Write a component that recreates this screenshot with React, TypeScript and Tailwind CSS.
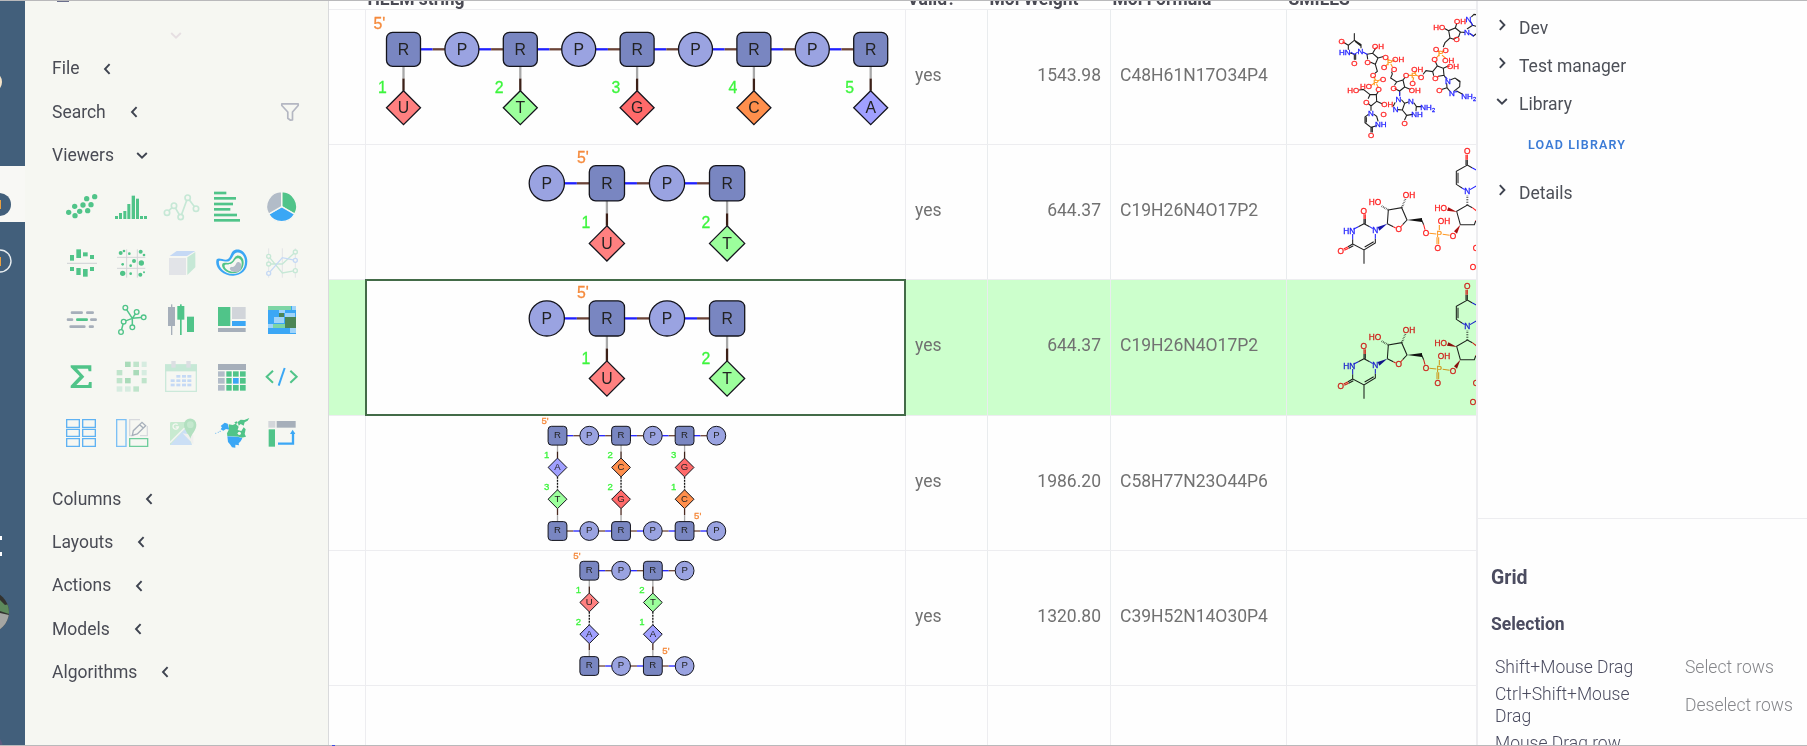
import React from 'react';

const GREEN = '#50c489';
const BLUE = '#3ba7f5';
const SLATE = '#a6afba';
const PALE_GREEN = '#c6e8d6';
const PALE_BLUE = '#c5d9f5';

type Dir = 'left' | 'right' | 'down';

function Chevron({ dir, color = '#3f4450' }: { dir: Dir; color?: string }) {
  const d = dir === 'left' ? 'M9.6 2.2 5 7l4.600 4.800' : dir === 'right' ? 'M4.800 2.200 9.400 7l-4.600 4.800' : 'M2.200 5 7 9.600 11.800 5';
  return (
    <svg width="14" height="14" viewBox="0 0 14 14" className="shrink-0" fill="none" stroke={color} strokeWidth="1.9">
      <path d={d} />
    </svg>
  );
}

function Rects({ list, fill }: { list: number[][]; fill: string }) {
  return (
    <g fill={fill}>
      {list.map(([x, y, w, h], i) => (
        <rect key={i} x={x} y={y} width={w} height={h} />
      ))}
    </g>
  );
}

function Dots({ list, fill = GREEN }: { list: number[][]; fill?: string }) {
  return (
    <g fill={fill}>
      {list.map(([x, y, r], i) => (
        <circle key={i} cx={x} cy={y} r={r} />
      ))}
    </g>
  );
}

function Rings({ list, r, color, width = 4 }: { list: number[][]; r: number; color: string; width?: number }) {
  return (
    <g fill="#f6f7f2" stroke={color} strokeWidth={width}>
      {list.map(([x, y], i) => (
        <circle key={i} cx={x} cy={y} r={r} />
      ))}
    </g>
  );
}

const topIcons: React.ReactNode[] = [
  <Dots key="scatter" list={[[56, 97, 8], [74, 79, 8], [75, 107, 8], [89, 94, 8], [99, 75, 8], [110, 56, 8], [134, 50, 8], [123, 74, 8], [113, 92, 8]]} />,
  <Rects key="hist" fill={GREEN} list={[[195, 108, 9, 9], [207, 99, 9, 18], [220, 93, 9, 24], [232, 72, 9, 45], [245, 47, 10, 70], [258, 56, 9, 61], [270, 108, 9, 9], [282, 108, 9, 9]]} />,
  <g key="line">
    <path d="M351 98 372 77 392 111 413 53 438 86" fill="none" stroke={PALE_GREEN} strokeWidth="5" />
    <Rings list={[[351, 98], [372, 77], [392, 111], [413, 53], [438, 86]]} r={8} color={PALE_GREEN} width={5} />
  </g>,
  <Rects key="bar" fill={GREEN} list={[[492, 35, 37, 8], [492, 51, 66, 8], [492, 68, 57, 8], [492, 84, 49, 8], [492, 101, 69, 8], [492, 117, 78, 8]]} />,
  <g key="pie" stroke="#f6f7f2" strokeWidth="4">
    <path d="M695 80V35A45 45 0 0 1 734 102.500Z" fill={GREEN} />
    <path d="M695 80 734 102.500A45 45 0 0 1 656 102.500Z" fill={BLUE} />
    <path d="M695 80 656 102.500A45 45 0 0 1 695 35Z" fill="#b2bcc8" />
  </g>,
  <g key="diverge">
    <Rects fill={GREEN} list={[[60, 225, 12, 17], [79, 208, 14, 26], [99, 217, 14, 12], [120, 225, 12, 12], [60, 261, 12, 12], [79, 264, 13, 21], [99, 267, 14, 23], [120, 261, 12, 12]]} />
    <path d="M51 250h90" stroke="#d3d5d8" strokeWidth="3.500" />
  </g>,
  <g key="matrix">
    <path d="M230 208v85M262 208v85M201 232h85M201 265h85" stroke="#d3d5d8" strokeWidth="3" />
    <Dots list={[[212, 219, 6], [222, 213, 4], [238, 221, 4], [272, 215, 6], [282, 225, 4], [252, 243, 6], [274, 249, 8], [218, 253, 4], [242, 257, 4], [218, 280, 8], [242, 281, 4], [271, 284, 6], [282, 277, 3]]} />
  </g>,
  <g key="cube">
    <path d="M357 234h51v51h-51z" fill="#e2e4e8" />
    <path d="M359 228 380 213h56l-25 15z" fill={PALE_BLUE} />
    <path d="M412 232 436 216v46l-24 23z" fill={PALE_GREEN} />
  </g>,
  <g key="contour">
    <path d="M500 238c8-8 24 6 34-1 10-8 8-23 20-27 20-7 38 12 38 34 0 28-18 42-42 43-32 1-58-26-50-49z" fill={BLUE} />
    <path d="M507 243c9-4 22 6 32-1 10-8 10-21 20-24 14-4 26 10 26 27 0 24-16 36-36 37-25 1-46-21-42-39z" fill="#f6f7f2" />
    <path d="M517 251c6-6 16 1 25-4 10-6 10-18 19-20 11-2 21 9 20 22-1 19-14 30-31 31-20 0-38-16-33-29z" fill={GREEN} />
    <path d="M524 255c6-4 14 1 22-5 8-5 9-15 17-15 8 0 13 8 12 17-1 15-10 23-23 24-15 0-31-11-28-21z" fill="#f6f7f2" />
    <path d="M540 263c4-4 10 0 14-5 5-5 4-11 10-12 7 0 11 7 10 14-1 10-8 16-17 16-10 0-20-7-17-13z" fill="#b2bcc8" />
  </g>,
  <g key="parallel" fill="none">
    <path d="M656 205v88M697 205v88M736 205v88" stroke="#e2e4e6" strokeWidth="3" />
    <path d="M656 229 697 279 736 272M656 252H697L736 216" stroke={PALE_GREEN} strokeWidth="4" />
    <path d="M656 280 697 233 736 241" stroke={PALE_BLUE} strokeWidth="4" />
    <Rings list={[[656, 229], [656, 252], [736, 272], [736, 216]]} r={6} color={PALE_GREEN} />
    <Rings list={[[656, 280], [736, 241]]} r={6} color={PALE_BLUE} />
  </g>,
  <g key="dashes" strokeWidth="8" strokeLinecap="round" stroke={SLATE}>
    <path d="M66 398h29M112 398h16M54 419h12M124 419h13M62 440h41M120 440h8" />
    <path d="M82 419h28" stroke={GREEN} />
  </g>,
  <g key="network">
    <path d="M247 415 226 383M247 415 260 396M247 415 281 412M247 415 221 425M247 415V442M221 425 213 456" stroke={GREEN} strokeWidth="4.500" />
    <Rings list={[[226, 383], [260, 396], [281, 412], [221, 425], [247, 442], [213, 456]]} r={7} color={GREEN} />
  </g>,
  <g key="candles">
    <Rects fill={SLATE} list={[[354, 381, 21, 57], [363, 373, 4, 92]]} />
    <Rects fill={GREEN} list={[[382, 378, 21, 41], [390, 373, 5, 92], [411, 410, 21, 46]]} />
  </g>,
  <g key="treemap">
    <Rects fill={GREEN} list={[[504, 381, 37, 57]]} />
    <Rects fill="#d1d5da" list={[[546, 381, 41, 36]]} />
    <Rects fill={BLUE} list={[[546, 423, 41, 15]]} />
    <Rects fill={SLATE} list={[[504, 444, 83, 12]]} />
  </g>,
  <g key="heat">
    <Rects fill={BLUE} list={[[654, 378, 84, 84]]} />
    <Rects fill="#7dd5a5" list={[[654, 378, 69, 12], [669, 432, 36, 12]]} />
    <Rects fill="#9fd4fa" list={[[726, 378, 12, 12], [687, 390, 18, 9], [672, 411, 30, 18], [705, 399, 30, 12], [654, 432, 15, 12], [720, 444, 18, 15]]} />
    <Rects fill="#4c8656" list={[[687, 399, 15, 12], [705, 411, 33, 33]]} />
  </g>,
];

const bottomIcons: React.ReactNode[] = [
  <path key="sigma" d="M62 136h62v18h-8l-2-8H81l22 24-24 25h36l2-9h8v18H62v-7l27-28-27-27z" fill={GREEN} />,
  <g key="squares">
    <Rects fill="#a9dbb9" list={[[225, 125, 17, 16], [250, 150, 17, 16], [225, 174, 17, 16]]} />
    <Rects fill="#bfe4cb" list={[[250, 125, 17, 16], [200, 150, 17, 16], [275, 174, 15, 16], [200, 174, 17, 16], [250, 199, 17, 16]]} />
    <Rects fill="#d6ece0" list={[[275, 125, 15, 16], [275, 150, 15, 16], [200, 199, 17, 16], [225, 199, 17, 16]]} />
  </g>,
  <g key="calendar">
    <path d="M347 135h92v79h-92z" fill="none" stroke="#cbe9da" strokeWidth="4" />
    <path d="M345 133h96v21h-96z" fill={PALE_GREEN} />
    <Rects fill="#dcdfe3" list={[[364, 123, 13, 20], [409, 123, 13, 20]]} />
    <Rects fill={PALE_BLUE} list={[[379, 165, 12, 8], [396, 165, 12, 8], [412, 165, 12, 8], [362, 178, 12, 8], [379, 178, 12, 8], [396, 178, 12, 8], [412, 178, 12, 8], [362, 191, 12, 8], [379, 191, 12, 8], [396, 191, 12, 8], [412, 191, 12, 8]]} />
  </g>,
  <g key="table">
    <Rects fill={SLATE} list={[[504, 132, 84, 18]]} />
    <Rects fill="#b2bcc8" list={[[504, 154, 20, 16], [504, 174, 20, 17], [504, 195, 20, 17]]} />
    <Rects fill={GREEN} list={[[529, 154, 16, 16], [549, 154, 17, 16], [570, 154, 17, 16], [529, 174, 16, 17], [570, 174, 17, 17], [529, 195, 16, 17], [549, 195, 17, 17], [570, 195, 17, 17]]} />
    <Rects fill={BLUE} list={[[549, 174, 17, 17]]} />
  </g>,
  <g key="code" fill="none" strokeWidth="6">
    <path d="M669 152 650 170 669 188M721 152 740 170 721 188" stroke={GREEN} />
    <path d="M704 144 686 197" stroke={BLUE} />
  </g>,
  <g key="tiles" fill="none" stroke="#5fb2f3" strokeWidth="4">
    <path d="M50 299h38v23H50zM98 299h38v23H98zM50 328h38v21H50zM98 328h38v21H98zM50 356h38v23H50zM98 356h38v23H98z" />
  </g>,
  <g key="form" fill="none" strokeWidth="4">
    <path d="M200 299h28v80h-28z" stroke="#7cc0f5" />
    <path d="M239 356h54v23h-54z" stroke="#6fcd9d" />
    <path d="M270 299h-31v48h12M292 318v29h-22" stroke="#d8dade" />
    <path d="M247 346 250 332 276 307 287 317 262 342ZM269 314 280 324" stroke={SLATE} />
  </g>,
  <g key="map">
    <path d="M364 306h60v69h-64v-65q0-4 4-4z" fill="#c8ead0" />
    <path d="M360 375 405 326 426 375z" fill="#cbdff5" />
    <path d="M360 368 404 324" stroke="#f1f3f0" strokeWidth="5" />
    <path d="M398 340 430 373V345z" fill="#f0f0ee" />
    <path d="M421 356c-3-14-19-24-19-42a18 18 0 0 1 37 0c0 18-15 28-18 42z" fill="#b2e0c0" />
    <circle cx="421" cy="314" r="10" fill="#c4e8ce" />
    <path d="M383 314a8 8 0 1 0 2 7h-8" fill="none" stroke="#f6f7f2" strokeWidth="4" />
  </g>,
  <g key="america">
    <path d="M512 318 524 308 533 311 538 329 528 327 520 332 512 328 516 322z" fill={BLUE} />
    <path d="M536 313 548 315 557 311 566 320 563 330 574 333 581 322 587 328 584 342 588 350 575 353 566 350 532 348 531 340 537 328z" fill={GREEN} />
    <path d="M563 306 572 299 583 300 598 294 593 302 584 307 581 317 572 312 566 317zM553 307l8-3 2 6-6 2z" fill={GREEN} />
    <path d="M532 349 566 351 577 355 572 364 566 370 567 376 556 374 556 383 546 382 541 374 534 366z" fill={BLUE} />
    <path d="M495 340h4M503 337h4M508 334h5" stroke="#8fc9f3" strokeWidth="3" />
    <circle cx="568" cy="340" r="5" fill="#f6f7f2" />
  </g>,
  <g key="pivot">
    <Rects fill="#d3d6da" list={[[655, 303, 21, 20]]} />
    <Rects fill={SLATE} list={[[680, 303, 57, 20]]} />
    <Rects fill={GREEN} list={[[656, 328, 19, 52]]} />
    <path d="M684 371H729V336" fill="none" stroke={BLUE} strokeWidth="7" />
    <path d="M720 342 728 329 736 342z" fill={BLUE} />
  </g>,
];

function ViewerIcons() {
  return (
    <div className="ml-8 mt-[2.500px] grid grid-cols-[repeat(5,50px)] auto-rows-[56px]">
      {[...topIcons, ...bottomIcons].map((icon, i) => {
        const row = Math.floor(i / 5);
        const x = 21 + 150 * (i % 5);
        const y = -3 + 168 * row - (row > 2 ? 420 : 0);
        return (
          <svg key={i} width="50" height="56" viewBox={`${x} ${y} 150 168`} className="overflow-visible">
            {icon}
          </svg>
        );
      })}
    </div>
  );
}

function MenuItem({ label, dir = 'left', gap = 'gap-[21px]', children }: { label: string; dir?: Dir; gap?: string; children?: React.ReactNode }) {
  return (
    <div className={`flex h-[43.200px] items-center pl-[27px] ${gap}`}>
      <span className="text-[17.500px] text-[#4a4c55]">{label}</span>
      <Chevron dir={dir} />
      {children}
    </div>
  );
}

function Rail() {
  return (
    <div className="h-full w-[25px] shrink-0 overflow-hidden bg-[#425f7b]">
      <svg width="25" height="746" viewBox="0 0 25 746">
        <rect y="166" width="25" height="56" fill="#f8f8f5" />
        <circle cx="-9" cy="82" r="10" fill="none" stroke="#f5e3c8" strokeWidth="2" />
        <circle cx="-0.500" cy="204.500" r="11.500" fill="#425f7b" />
        <rect y="200" width="1" height="9" fill="#eaa040" />
        <circle cx="0" cy="261" r="11" fill="none" stroke="#e8edf0" strokeWidth="1.400" />
        <rect y="257" width="1" height="9" fill="#eaa040" />
        <rect y="536" width="2" height="4" fill="#fff" />
        <rect y="552" width="2" height="4" fill="#fff" />
        <clipPath id="avatar">
          <circle cx="-12" cy="612" r="21" />
        </clipPath>
        <g clipPath="url(#avatar)">
          <rect y="590" width="12" height="44" fill="#33332f" />
          <path d="M0 600 5 605 9 604V614L0 611Z" fill="#5d8a5c" />
          <path d="M0 613 9 615V634H0Z" fill="#a5a6a3" />
        </g>
        <circle cx="-12" cy="748" r="15" fill="#5c5a80" />
      </svg>
    </div>
  );
}

type Atom = { t: string; x: number; y: number };
type Link = { x1: number; y1: number; x2: number; y2: number; kind: 'bb' | 'bbr' | 'down' | 'up' | 'pair' };
type Tag = { t: string; x: number; y: number; c: string };

const baseColors: Record<string, string> = { U: '#ff8080', T: '#9cff9c', G: '#ff6a6a', C: '#ff8f4c', A: '#a0a0ff' };

function HelmDrawing({ top, height, s, atoms, links, tags }: { top: number; height: number; s: number; atoms: Atom[]; links: Link[]; tags: Tag[] }) {
  const small = s < 12;
  const font = small ? 9.6 : 15.8;
  const lw = small ? 1.3 : 2.3;
  const edge = small ? 1 : 1.3;
  return (
    <svg width="539" height={height} viewBox={`366 ${top} 539 ${height}`} className="block" fontFamily='"Liberation Sans", Arial, sans-serif'>
      {links.map((l, i) => {
        const mx = (l.x1 + l.x2) / 2;
        const my = (l.y1 + l.y2) / 2;
        if (l.kind === 'pair') {
          return <line key={i} x1={l.x1} y1={l.y1} x2={l.x2} y2={l.y2} stroke="#111" strokeWidth="1.300" strokeDasharray="2 1" />;
        }
        const [a, b] = { bb: ['#2020ff', '#6b4438'], bbr: ['#6b4438', '#2020ff'], down: ['#a8a8a8', '#3c2018'], up: ['#4c2a20', '#a8a8a8'] }[l.kind];
        return (
          <g key={i} strokeWidth={lw}>
            <line x1={l.x1} y1={l.y1} x2={mx} y2={my} stroke={a} />
            <line x1={mx} y1={my} x2={l.x2} y2={l.y2} stroke={b} />
          </g>
        );
      })}
      {atoms.map((a, i) => (
        <g key={i}>
          {a.t === 'R' ? (
            <rect x={a.x - s} y={a.y - s} width={s * 2} height={s * 2} rx={s * 0.36} fill="#7986c1" stroke="#14141c" strokeWidth={edge} />
          ) : a.t === 'P' ? (
            <circle cx={a.x} cy={a.y} r={s} fill="#9aa3e1" stroke="#14141c" strokeWidth={edge} />
          ) : (
            <path d={`M${a.x} ${a.y - s}L${a.x + s} ${a.y}L${a.x} ${a.y + s}L${a.x - s} ${a.y}Z`} fill={baseColors[a.t]} stroke="#14141c" strokeWidth={edge} />
          )}
          <text x={a.x} y={a.y + (small ? 2.4 : 5.6)} textAnchor="middle" fontSize={font} fill="#222">
            {a.t}
          </text>
        </g>
      ))}
      {tags.map((t, i) => (
        <text key={i} x={t.x} y={t.y} fontSize={font} fill={t.c} stroke={t.c} strokeWidth="0.300">
          {t.t}
        </text>
      ))}
    </svg>
  );
}

const TAG = '#3df53d';
const END = '#f58a3c';

function singleStrand(seq: string, bases: string, x0: number, y: number, pitch: number, s: number) {
  const atoms: Atom[] = [];
  const links: Link[] = [];
  const tags: Tag[] = [];
  let n = 0;
  seq.split('').forEach((t, i) => {
    const x = x0 + pitch * i;
    atoms.push({ t, x, y });
    if (i < seq.length - 1) links.push({ x1: x + s, y1: y, x2: x + pitch - s, y2: y, kind: 'bb' });
    if (t === 'R') {
      if (n === 0) tags.push({ t: "5'", x: x - 30, y: y - 20, c: END });
      atoms.push({ t: bases[n], x, y: y + pitch });
      links.push({ x1: x, y1: y + s, x2: x, y2: y + pitch - s, kind: 'down' });
      tags.push({ t: String(n + 1), x: x - 25.5, y: y + pitch - 15, c: TAG });
      n += 1;
    }
  });
  return { atoms, links, tags };
}

function duplex(upper: string, lower: string, x0: number, y: number) {
  const p = 31.77;
  const s = 9.4;
  const atoms: Atom[] = [];
  const links: Link[] = [];
  const tags: Tag[] = [];
  const n = upper.length;
  for (let i = 0; i < n * 2; i += 1) {
    const x = x0 + p * i;
    const t = i % 2 === 0 ? 'R' : 'P';
    atoms.push({ t, x, y }, { t, x, y: y + 3 * p });
    if (i < n * 2 - 1) {
      links.push({ x1: x + s, y1: y, x2: x + p - s, y2: y, kind: 'bb' });
      links.push({ x1: x + s, y1: y + 3 * p, x2: x + p - s, y2: y + 3 * p, kind: 'bbr' });
    }
    if (t === 'R') {
      const k = i / 2;
      atoms.push({ t: upper[k], x, y: y + p }, { t: lower[k], x, y: y + 2 * p });
      links.push({ x1: x, y1: y + s, x2: x, y2: y + p - s, kind: 'down' });
      links.push({ x1: x, y1: y + p + s, x2: x, y2: y + 2 * p - s, kind: 'pair' });
      links.push({ x1: x, y1: y + 2 * p + s, x2: x, y2: y + 3 * p - s, kind: 'up' });
      tags.push({ t: String(k + 1), x: x - 13.5, y: y + 22, c: TAG });
      tags.push({ t: String(n - k), x: x - 13.5, y: y + 54, c: TAG });
    }
  }
  tags.push({ t: "5'", x: x0 - 16, y: y - 12, c: END });
  tags.push({ t: "5'", x: x0 + p * (2 * n - 2) + 9.5, y: y + 83, c: END });
  return { atoms, links, tags };
}

const RED = '#ff2222';
const NB = '#2222ff';
const PO = '#ff9922';

type MolLabel = [string, number, number, string];

function MolLabels({ list, size }: { list: MolLabel[]; size: number }) {
  return (
    <g fontSize={size} textAnchor="middle" fontFamily='"Liberation Sans", Arial, sans-serif'>
      {list.map(([t, x, y, c], i) => (
        <text key={i} x={x} y={y + size * 0.36} fill={c} stroke={c} strokeWidth="0.900">
          {t === 'NH2' ? (
            <>
              NH<tspan fontSize={size * 0.7} dy="6">2</tspan>
            </>
          ) : (
            t
          )}
        </text>
      ))}
    </g>
  );
}

const pentamerLabels: MolLabel[] = [
  ['O', 125, 123, RED], ['HN', 134, 156, NB], ['N', 181, 153, NB], ['O', 163, 188, RED], ['OH', 234, 137, RED], ['O', 203, 187, RED],
  ['O', 257, 170, RED], ['P', 269, 187, PO], ['OH', 295, 176, RED], ['O', 252, 201, RED], ['O', 282, 207, RED], ['O', 219, 225, RED],
  ['P', 228, 246, PO], ['O', 249, 238, RED], ['HO', 198, 258, RED], ['O', 236, 268, RED], ['HO', 160, 271, RED], ['O', 199, 306, RED],
  ['OH', 262, 313, RED], ['N', 213, 340, NB], ['O', 251, 341, RED], ['NH', 242, 373, NB], ['O', 213, 405, RED], ['O', 281, 263, RED],
  ['O', 318, 226, RED], ['P', 342, 226, PO], ['OH', 352, 207, RED], ['O', 338, 250, RED], ['O', 363, 230, RED], ['OH', 344, 270, RED],
  ['N', 295, 296, NB], ['N', 287, 328, NB], ['N', 333, 304, NB], ['NH', 351, 341, NB], ['NH2', 383, 320, NB], ['O', 314, 368, RED],
  ['O', 406, 235, RED], ['N', 444, 243, NB], ['O', 418, 271, RED], ['N', 456, 280, NB], ['NH2', 506, 288, NB], ['OH', 459, 197, RED],
  ['OH', 445, 180, RED], ['O', 404, 178, RED], ['P', 422, 160, PO], ['O', 437, 149, RED], ['O', 408, 147, RED], ['O', 470, 118, RED],
  ['HO', 418, 81, RED], ['OH', 480, 63, RED], ['N', 505, 58, NB], ['N', 501, 97, NB],
];

function Pentamer() {
  return (
    <svg width="188" height="134" viewBox="-36 30 564 402" className="block">
      <g fill="none" strokeWidth="3.300" strokeLinecap="round">
        <path
          stroke="#222"
          d="M163 101V121L145 136V148M163 121L183 134V143M166 125L181 137M145 136L134 129M163 163L150 159M163 163V178M167 163V178M201 163L218 160L234 174L226 193L212 187M201 163L203 177M218 160L226 146M234 174L248 170M226 193L232 214L226 219M205 295L210 284L229 284L230 304L213 318L205 311M210 284L190 268L178 270M229 284L234 276M230 304L246 311M213 318L213 331M204 344L195 351V368L213 382L230 377M199 353V366M222 343L230 349L234 363M213 382V396M217 382V396M275 216L277 222L272 234L290 246L309 240L314 261L299 273L288 268M290 246L284 255M309 240L315 232M314 261L330 268M299 273V286M305 300L314 310L307 330L294 329M314 310L325 306M285 308L280 318M307 330L320 346L314 359M320 346L338 343M342 309L349 319L348 332M349 319L363 320M370 222L378 212L398 215L412 198L430 205L432 226L415 229M398 215L401 226M412 198L407 187M430 205L443 199M432 226L437 234M452 239L465 234L480 244L479 260L464 272M469 237L477 244M440 251L441 263L449 273M441 263L427 268M470 273L488 283M430 140L435 128L450 114L446 92L466 84L481 96L476 110L461 117M450 114L461 118M446 92L435 86M466 84L470 71M481 96L493 97M510 101L520 108L528 102M512 66L518 76L528 79M515 50L522 43L528 44M502 86L518 76"
        />
        <path stroke={RED} d="M134 129L128 126M226 146L229 143M288 268L285 265M443 199L449 198M407 187L405 184M415 229L412 232" />
        <path stroke={NB} d="M190 157L201 163M154 157L163 163M172 157L163 163M299 277V287M437 231L441 236M471 275L463 276M511 101L520 108M511 64L518 76" />
        <path stroke={PO} d="M262 176L267 181M276 184L284 180M262 193L257 198M273 193L277 200M222 230L226 239M234 242L241 239M222 250L213 256M230 252L234 261M325 226H335M344 219L349 214M341 233L339 242M348 226L357 229M409 174L416 166M413 153L418 156M427 156L432 152M427 166L436 174" />
      </g>
      <MolLabels list={pentamerLabels} size={24} />
    </svg>
  );
}

const dimerLabels: MolLabel[] = [
  ['O', 191, 212, RED], ['HN', 148, 272, NB], ['N', 226, 271, NB], ['O', 122, 332, RED], ['HO', 225, 187, RED], ['OH', 327, 166, RED],
  ['O', 296, 268, RED], ['O', 378, 279, RED], ['P', 418, 281, PO], ['OH', 432, 244, RED], ['O', 413, 323, RED], ['O', 459, 287, RED],
  ['HO', 422, 205, RED], ['N', 502, 154, NB], ['O', 502, 34, RED], ['O', 528, 323, RED], ['OH', 528, 380, RED],
];

function Dimer() {
  return (
    <svg width="188" height="134" viewBox="-36 15 564 402" className="block mix-blend-multiply">
      <g fill="none" strokeWidth="3.200">
        <path
          stroke="#222"
          d="M192 251V237M196 251V237M192 251L175 260M192 251L209 260M226 296V309L192 330L158 312V298M221 305L194 321M158 312L144 320M160 317L146 325M192 330V371M262 251L265 210L305 203L321 240L308 254M262 251L280 260M365 240L371 254M481 254L470 214L502 195L517 203M481 254H523L527 243M486 144L469 133V94L502 75L516 83M474 130V98M502 75V59M498 75V59M502 163"
        />
        <path stroke={RED} d="M192 237V223M196 237V223M144 320L131 327M146 325L133 331M280 260L287 264M308 254L302 261M371 254L375 269M517 203L530 213M527 243L531 238M502 59V44M498 59V44" />
        <path stroke={NB} d="M175 260L160 268M209 260L218 266M226 282V296M158 298V282M516 83L530 91M494 149L486 144M510 149L530 137" />
        <path stroke={PO} d="M388 280L409 282M428 283L449 286M418 255V270M411 292V313M416 292V313" />
        <path stroke="#444" strokeWidth="6" strokeDasharray="2 3" d="M264 209L244 198M306 202L316 177M502 194V166" />
      </g>
      <path d="M262 251L233 261L238 272Z" fill="#1515aa" />
      <path d="M321 240L366 234V246Z" fill="#111" />
      <path d="M481 254L462 274L471 281Z" fill="#aa1111" />
      <path d="M471 216L445 202L441 212Z" fill="#aa1111" />
      <MolLabels list={dimerLabels} size={25} />
    </svg>
  );
}

const rows = [
  { h: 'h-[135px]', weight: '1543.98', formula: 'C48H61N17O34P4', top: 10, height: 134, s: 17, helm: singleStrand('RPRPRPRPR', 'UTGCA', 403.5, 49.3, 58.4, 17), mol: <Pentamer /> },
  { h: 'h-[135px]', weight: '644.37', formula: 'C19H26N4O17P2', top: 145, height: 134, s: 17.6, helm: singleStrand('PRPR', 'UT', 546.8, 183.3, 60.1, 17.6), mol: <Dimer /> },
  { h: 'h-[136px]', weight: '644.37', formula: 'C19H26N4O17P2', top: 280, height: 134, s: 17.6, helm: singleStrand('PRPR', 'UT', 546.8, 318.4, 60.1, 17.6), mol: <Dimer />, current: true },
  { h: 'h-[135px]', weight: '1986.20', formula: 'C58H77N23O44P6', top: 416, height: 134, s: 9.4, helm: duplex('ACG', 'TGC', 557.5, 435.7), mol: null },
  { h: 'h-[135px]', weight: '1320.80', formula: 'C39H52N14O30P4', top: 551, height: 134, s: 9.4, helm: duplex('UT', 'AA', 589.3, 570.7), mol: null },
];

const COLS = 'grid grid-cols-[37px_540px_82px_123px_176px_189px]';

function HelmGrid() {
  return (
    <div className="flex w-[1147px] shrink-0 flex-col overflow-hidden bg-[#fefefe] text-[17.500px]">
      <div className={`${COLS} h-[10px] shrink-0 overflow-hidden border-b border-[#ededf0] leading-[20px] font-bold text-[#4b4b55]`}>
        {['', 'HELM string', 'Valid?', 'Mol Weight', 'Mol Formula', 'SMILES'].map((h, i) => (
          <div key={i} className="-mt-[11px] whitespace-nowrap pl-[1.500px]">
            {h}
          </div>
        ))}
      </div>
      {rows.map((r, i) => (
        <div key={i} className={`${COLS} ${r.h} shrink-0 border-b border-[#ededf0] leading-[130px] text-[#717171] ${r.current ? 'bg-[#ccffcc]' : ''}`}>
          <div className="border-r border-[#ededf0]" />
          <div className={r.current ? 'relative border-r border-[#ededf0] bg-[#fefefe]' : 'border-r border-[#ededf0]'}>
            <HelmDrawing top={r.top} height={r.height} s={r.s} {...r.helm} />
            {r.current && <div className="absolute -top-px -left-px h-[137px] w-[541px] border-2 border-[#436b48]" />}
          </div>
          <div className="border-r border-[#e9ecee] pl-[9px]">yes</div>
          <div className="border-r border-[#e9ecee] pr-[9px] text-right">{r.weight}</div>
          <div className="border-r border-[#e9ecee] pl-[9px]">{r.formula}</div>
          <div className="overflow-hidden pl-px">{r.mol}</div>
        </div>
      ))}
      <div className={`${COLS} grow`}>
        {[0, 1, 2, 3, 4].map((c) => (
          <div key={c} className="border-r border-[#ededf0]" />
        ))}
        <div />
      </div>
    </div>
  );
}

function PanelItem({ label, dir = 'right' }: { label: string; dir?: Dir }) {
  return (
    <div className="flex h-[38px] items-center gap-[10px] pl-[17px]">
      <div className="-mt-1.5">
        <Chevron dir={dir} />
      </div>
      <span className="text-[17.500px] text-[#4d5058]">{label}</span>
    </div>
  );
}

function ContextPanel() {
  return (
    <div className="flex grow flex-col overflow-hidden border-l-2 border-[#ededf0] bg-[#fefefe]">
      <div className="h-[519px] shrink-0 border-b border-[#ededf0] pt-[9px]">
        <PanelItem label="Dev" />
        <PanelItem label="Test manager" />
        <PanelItem label="Library" dir="down" />
        <div className="flex h-[51px] items-center pb-[6px] pl-[50px] text-[12.500px] font-semibold tracking-[1.150px] text-[#3b7bd6]">LOAD LIBRARY</div>
        <PanelItem label="Details" />
      </div>
      <div className="shrink-0 pt-[46px] pl-[13px] text-[#4b4c60]">
        <div className="text-[19.500px] leading-[26px] font-bold">Grid</div>
        <div className="mt-[21px] text-[17.500px] leading-6 font-bold">Selection</div>
        <div className="mt-[20px] grid grid-cols-[190px_1fr] pl-1 text-[17.500px] leading-[22.500px] font-light">
          <div className="pb-1">Shift+Mouse Drag</div>
          <div className="pb-1 text-[#85868a]">Select rows</div>
          <div className="w-[150px] pb-1">Ctrl+Shift+Mouse Drag</div>
          <div className="self-center pb-1 text-[#85868a]">Deselect rows</div>
          <div>Mouse Drag row</div>
        </div>
      </div>
    </div>
  );
}

export default function App() {
  return (
    <div className="relative flex h-[746px] w-[1807px] overflow-hidden bg-[#fefefe] font-['Roboto',sans-serif]">
      <Rail />
      <div className="flex w-[304px] shrink-0 flex-col border-r border-[#d9dadc] bg-[#f6f7f2]">
        <div className="flex h-[47px] flex-col">
          <div className="ml-8 h-[2px] w-3 bg-[#6a6f8c]" />
          <div className="ml-[144px] mt-[26px]">
            <Chevron dir="down" color="#e6dfe2" />
          </div>
        </div>
        <MenuItem label="File" />
        <MenuItem label="Search">
          <svg width="20" height="20" viewBox="0 0 20 20" className="mr-[28px] ml-auto" fill="none" stroke="#b4b7c2" strokeWidth="1.700" strokeLinejoin="round">
            <path d="M1.800 1.900H18.200V3.500L12.500 10V18L10.500 18.200 7.800 16.200V10L1.800 3.500Z" />
          </svg>
        </MenuItem>
        <MenuItem label="Viewers" dir="down" />
        <ViewerIcons />
        <div className="pt-[18.500px]">
          <MenuItem label="Columns" />
          <MenuItem label="Layouts" />
          <MenuItem label="Actions" />
          <MenuItem label="Models" />
          <MenuItem label="Algorithms" />
        </div>
      </div>
      <HelmGrid />
      <ContextPanel />
      <div className="absolute top-0 left-0 h-px w-full bg-[#b9b9bb]" />
      <div className="absolute bottom-0 left-0 h-px w-full bg-[#b9b9bb]" />
      <div className="absolute bottom-0 left-[332px] h-px w-[3px] bg-[#3a4de0]" />
    </div>
  );
}
